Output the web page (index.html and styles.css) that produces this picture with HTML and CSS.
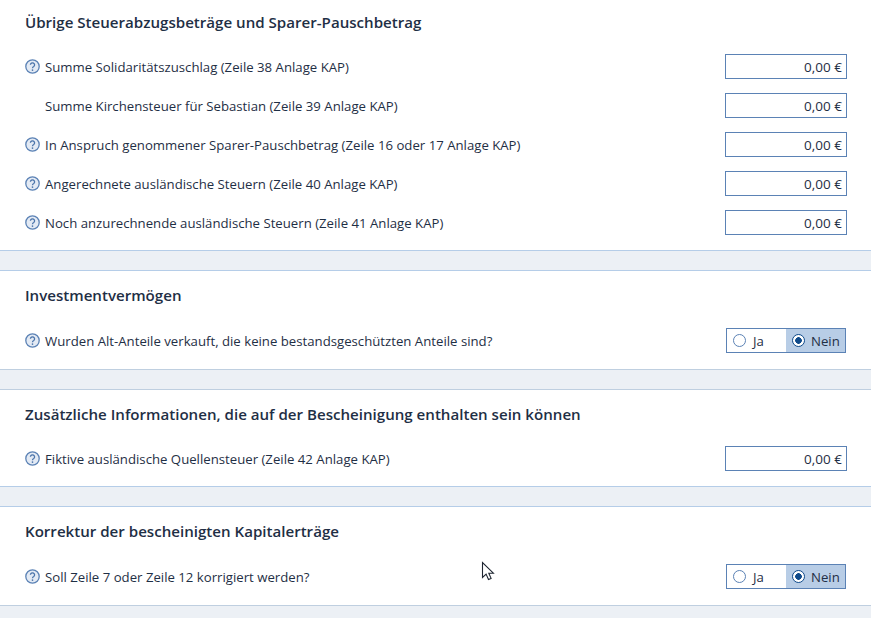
FILE: index.html
```html
<!DOCTYPE html>
<html lang="de">
<head>
    <meta charset="UTF-8">
    <meta name="viewport" content="width=device-width, initial-scale=1.0">
    <title>Steuerabzugsbeträge</title>
    <link rel="stylesheet" href="styles.css">
</head>
<body>
    <svg class="icon-defs" width="0" height="0">
        <symbol id="help" viewBox="0 0 15 15">
            <circle cx="7.5" cy="7.5" r="6.7" fill="#e3eaf4" stroke="#5b82b5" stroke-width="1.3"/>
            <path d="M5.4 5.8a2.1 2 0 1 1 3.3 1.7c-.8.5-1.2.9-1.2 1.7" fill="none" stroke="#4c75ab" stroke-width="1.3"/>
            <circle cx="7.5" cy="11.1" r=".85" fill="#4c75ab"/>
        </symbol>
    </svg>

    <section class="panel panel-first">
        <h2>Übrige Steuerabzugsbeträge und Sparer-Pauschbetrag</h2>
        <div class="row">
            <svg class="help"><use href="#help"/></svg>
            <span class="label">Summe Solidaritätszuschlag (Zeile 38 Anlage KAP)</span>
            <div class="amount">0,00 €</div>
        </div>
        <div class="row">
            <span class="help"></span>
            <span class="label">Summe Kirchensteuer für Sebastian (Zeile 39 Anlage KAP)</span>
            <div class="amount">0,00 €</div>
        </div>
        <div class="row">
            <svg class="help"><use href="#help"/></svg>
            <span class="label">In Anspruch genommener Sparer-Pauschbetrag (Zeile 16 oder 17 Anlage KAP)</span>
            <div class="amount">0,00 €</div>
        </div>
        <div class="row">
            <svg class="help"><use href="#help"/></svg>
            <span class="label">Angerechnete ausländische Steuern (Zeile 40 Anlage KAP)</span>
            <div class="amount">0,00 €</div>
        </div>
        <div class="row">
            <svg class="help"><use href="#help"/></svg>
            <span class="label">Noch anzurechnende ausländische Steuern (Zeile 41 Anlage KAP)</span>
            <div class="amount">0,00 €</div>
        </div>
    </section>
    <div class="band"></div>

    <section class="panel panel-choice">
        <h2>Investmentvermögen</h2>
        <div class="row">
            <svg class="help"><use href="#help"/></svg>
            <span class="label">Wurden Alt-Anteile verkauft, die keine bestandsgeschützten Anteile sind?</span>
            <div class="choice">
                <div class="option"><span class="radio"></span>Ja</div>
                <div class="option selected"><span class="radio"></span>Nein</div>
            </div>
        </div>
    </section>
    <div class="band band-grey"></div>

    <section class="panel panel-single">
        <h2>Zusätzliche Informationen, die auf der Bescheinigung enthalten sein können</h2>
        <div class="row">
            <svg class="help"><use href="#help"/></svg>
            <span class="label">Fiktive ausländische Quellensteuer (Zeile 42 Anlage KAP)</span>
            <div class="amount">0,00 €</div>
        </div>
    </section>
    <div class="band"></div>

    <section class="panel panel-choice">
        <h2>Korrektur der bescheinigten Kapitalerträge</h2>
        <div class="row">
            <svg class="help"><use href="#help"/></svg>
            <span class="label">Soll Zeile 7 oder Zeile 12 korrigiert werden?</span>
            <div class="choice">
                <div class="option"><span class="radio"></span>Ja</div>
                <div class="option selected"><span class="radio"></span>Nein</div>
            </div>
        </div>
    </section>
    <div class="band band-grey"></div>

    <!-- mouse pointer from the screenshot -->
    <svg class="pointer" width="14" height="20" viewBox="0 0 14 20">
        <path d="M1.5 1.5v15l3.6-3.4 2.4 5.4 2.6-1.1-2.3-5.2h4.6z" fill="#fff" stroke="#1d2430" stroke-width="1.1"/>
    </svg>
</body>
</html>
```

FILE: styles.css
```css
body{
    margin: 0;
    height: 618px;
    overflow: hidden;
    position: relative;
    background: white;
    color: #1f2f45;
    font-family: "Open Sans", "Noto Sans", sans-serif;
    font-size: 13.2px;
}

.icon-defs{
    position: absolute;
}

.panel{
    padding: 14px 24px 15px 25px;
}

.panel-first{
    padding-top: 12px;
}

.panel-choice{
    padding-bottom: 16px;
}

h2{
    margin: 0 0 23px;
    font-size: 15.1px;
    line-height: 20px;
    font-weight: 600;
}

.panel-first h2,
.panel-single h2{
    margin-bottom: 22px;
}

.row{
    display: flex;
    align-items: center;
    height: 25px;
    margin-bottom: 14px;
}

.row:last-child{
    margin-bottom: 0;
}

.help{
    width: 15px;
    height: 15px;
    margin-right: 5px;
    flex: none;
}

.label{
    flex: 1;
}

.amount{
    box-sizing: border-box;
    width: 122px;
    height: 25px;
    line-height: 24px;
    border: 1px solid #5b82b5;
    padding: 0 4px;
    font-size: 13.5px;
    text-align: right;
}

.choice{
    box-sizing: border-box;
    display: flex;
    width: 120px;
    height: 25px;
    margin-right: 1px;
    border: 1px solid #5b82b5;
}

.option{
    display: flex;
    align-items: center;
    width: 59px;
    padding-left: 6px;
    box-sizing: border-box;
}

.option.selected{
    background: #b8cde6;
}

.radio{
    box-sizing: border-box;
    width: 13px;
    height: 13px;
    margin-right: 7px;
    border: 1px solid #5b82b5;
    border-radius: 50%;
    background: white;
}

.selected .radio{
    margin-right: 6px;
    border: 1.5px solid #0f4a8a;
    background: radial-gradient(circle, #0f4a8a 3px, white 3.6px);
}

.band{
    height: 19px;
    background: #ecf0f5;
    border-top: 1px solid #b5cde8;
    border-bottom: 1px solid #b5cde8;
}

.band-grey{
    border-color: #bfcfe0;
}

.pointer{
    position: absolute;
    left: 481px;
    top: 561px;
}
```
